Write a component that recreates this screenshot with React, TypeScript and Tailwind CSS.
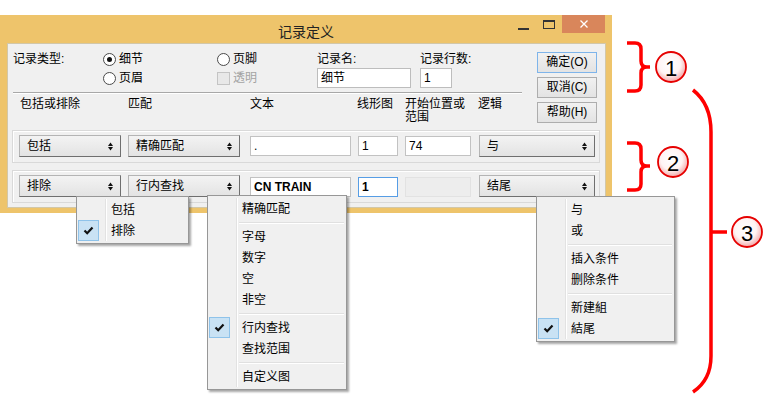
import React from "react";

const font = "font-['Liberation_Sans','Noto_Sans_CJK_SC',sans-serif]";

function Arrows() {
  return (
    <svg width="5" height="9" viewBox="0 0 5 9" className="shrink-0">
      <polygon points="0,4 2.5,0.5 5,4" fill="#111" />
      <polygon points="0,5 2.5,8.5 5,5" fill="#111" />
    </svg>
  );
}

function Select({ label, className }: { label: string; className: string }) {
  return (
    <div
      className={`flex h-[22px] items-center justify-between border border-[#b4b4b4] border-r-[#6f6f6f] border-b-[#6f6f6f] bg-gradient-to-b from-[#f3f3f3] to-[#e3e3e3] pl-[7px] pr-[7px] text-[12px] leading-[14px] text-black ${className}`}
    >
      <span>{label}</span>
      <Arrows />
    </div>
  );
}

function Field({ value, className }: { value: string; className: string }) {
  return (
    <div
      className={`mt-[1px] h-[20px] border bg-white px-[3px] text-[12px] leading-[18px] text-black ${className}`}
    >
      {value}
    </div>
  );
}

function Radio({ checked, label }: { checked?: boolean; label: string }) {
  return (
    <div className="flex h-[16px] items-center gap-[3px]">
      <div className="flex h-[13px] w-[13px] items-center justify-center rounded-full border border-[#4a4a4a] bg-white">
        {checked && <div className="h-[5px] w-[5px] rounded-full bg-[#111]" />}
      </div>
      <span className="text-[12px] leading-[14px] text-black">{label}</span>
    </div>
  );
}

function Button({ label, primary }: { label: string; primary?: boolean }) {
  return (
    <div
      className={`h-[21px] w-[60px] border bg-gradient-to-b from-[#f1f1f1] to-[#e3e3e3] text-center text-[12px] leading-[19px] text-black ${
        primary ? "border-[#7eb4ea]" : "border-[#adadad]"
      }`}
    >
      {label}
    </div>
  );
}

function Check() {
  return (
    <div className="ml-[1px] flex h-[21px] w-[21px] items-center justify-center border border-[#8fc3ea] bg-[#c9e2f4]">
      <svg width="11" height="9" viewBox="0 0 11 9">
        <path d="M1.5 4.5 L4.2 7.2 L9.5 1.5" stroke="#111" strokeWidth="2.2" fill="none" />
      </svg>
    </div>
  );
}

type Item = { label?: string; checked?: boolean; sep?: boolean };

function Menu({ items, className }: { items: Item[]; className: string }) {
  return (
    <div
      className={`absolute border border-[#979797] bg-[#f0f0f0] py-[2px] shadow-[2px_2px_2px_rgba(0,0,0,0.35)] ${className}`}
    >
      {items.map((it, i) =>
        it.sep ? (
          <div key={i} className="flex h-[7px]">
            <div className="w-[28px]" />
            <div className="w-[2px] border-l border-r border-l-[#e2e2e2] border-r-white" />
            <div className="flex flex-1 items-center pl-[1px] pr-[2px]">
              <div className="h-[2px] w-full border-t border-b border-t-[#e0e0e0] border-b-white" />
            </div>
          </div>
        ) : (
          <div key={i} className="flex h-[21px] items-center">
            <div className="flex w-[28px] items-center">{it.checked && <Check />}</div>
            <div className="h-full w-[2px] border-l border-r border-l-[#e2e2e2] border-r-white" />
            <span className="pl-[4px] text-[12px] leading-[14px] text-black">{it.label}</span>
          </div>
        )
      )}
    </div>
  );
}

function Annotations() {
  const circle = (cx: number, cy: number, n: string) => (
    <g>
      <circle cx={cx} cy={cy} r="15" fill="url(#bub)" stroke="#e60000" strokeWidth="1.8" />
      <text
        x={cx}
        y={cy + 1}
        textAnchor="middle"
        dominantBaseline="central"
        fontSize="22"
        fontFamily="Liberation Sans, Arial, sans-serif"
        fill="#000"
      >
        {n}
      </text>
    </g>
  );
  return (
    <svg className="pointer-events-none absolute left-0 top-0" width="778" height="419" viewBox="0 0 778 419">
      <defs>
        <radialGradient id="bub" cx="45%" cy="40%" r="60%">
          <stop offset="0%" stopColor="#ffffff" />
          <stop offset="60%" stopColor="#fff4f4" />
          <stop offset="100%" stopColor="#f2a8a8" />
        </radialGradient>
      </defs>
      <g stroke="#ff0000" strokeWidth="3.5" fill="none">
        <path d="M627 43 L635 43 Q641 43 641 49 L641 61 Q641 67 647 67 L650 67 M647 67 Q641 67 641 73 L641 85 Q641 91 635 91 L627 91" />
        <path d="M627 143 L635 143 Q641 143 641 149 L641 160 Q641 166 647 166 L650 166 M647 166 Q641 166 641 172 L641 184 Q641 190 635 190 L627 190" />
        <path d="M693 90 Q711 104 711 132 L711 356 Q711 380 693 392" />
        <path d="M711 232 L727 232" />
      </g>
      {circle(671, 67, "1")}
      {circle(673, 162, "2")}
      {circle(747, 232, "3")}
    </svg>
  );
}

export default function App() {
  return (
    <div className={`relative h-[419px] w-[778px] overflow-hidden bg-white ${font}`}>
      <div className="pt-[15px]">
        <div className="w-[612px] bg-[#eec46b] pb-[5px] pl-[7px] pr-[6px]">
          {/* title bar */}
          <div className="-ml-[7px] -mr-[6px] flex h-[28px]">
            <div className="w-[101px]" />
            <div className="flex-1 pt-[8px] text-center text-[14px] leading-[18px] text-[#222]">记录定义</div>
            <div className="flex w-[101px] items-start">
              <div className="flex h-[18px] w-[25px] items-end justify-center pb-[3px]">
                <div className="h-[2px] w-[11px] bg-[#333]" />
              </div>
              <div className="flex h-[18px] w-[26px] items-center justify-center">
                <div className="h-[9px] w-[12px] border border-t-2 border-[#333]" />
              </div>
              <div className="flex h-[18px] w-[43px] items-center justify-center bg-[#d9865b]">
                <svg width="8" height="8" viewBox="0 0 8 8">
                  <path d="M0.5 0.5 L7.5 7.5 M7.5 0.5 L0.5 7.5" stroke="#fff" strokeWidth="1.3" />
                </svg>
              </div>
              <div className="w-[7px]" />
            </div>
          </div>

          {/* client area */}
          <div className="h-[165px] border border-[#d2c7a8] bg-[#f0f0f0]">
            <div className="flex h-[86px]">
              <div className="w-[529px] pl-[5px]">
                <div className="mt-[7px] flex">
                  <div className="w-[90px] text-[12px] leading-[16px] text-black">记录类型:</div>
                  <div className="flex w-[114px] flex-col gap-[3px]">
                    <Radio checked label="细节" />
                    <Radio label="页眉" />
                  </div>
                  <div className="flex w-[100px] flex-col gap-[3px]">
                    <Radio label="页脚" />
                    <div className="flex h-[16px] items-center gap-[3px]">
                      <div className="h-[13px] w-[13px] border border-[#c4c4c4] bg-[#e8e8e8]" />
                      <span className="text-[12px] leading-[14px] text-[#a3a3a3]">透明</span>
                    </div>
                  </div>
                  <div className="w-[103px]">
                    <div className="text-[12px] leading-[16px] text-black">记录名:</div>
                    <Field value="细节" className="w-[94px] border-[#bdbdbd]" />
                  </div>
                  <div>
                    <div className="text-[12px] leading-[16px] text-black">记录行数:</div>
                    <Field value="1" className="w-[32px] border-[#bdbdbd]" />
                  </div>
                </div>
                <div className="mt-[4px] h-[2px] w-[509px] border-t border-b border-t-[#a8a8a8] border-b-white" />
                <div className="mt-[4px] grid grid-cols-[108px_122px_107px_48px_73px_60px] pl-[7px] text-[12px] leading-[13px] text-black">
                  <div>包括或排除</div>
                  <div>匹配</div>
                  <div>文本</div>
                  <div>线形图</div>
                  <div>
                    开始位置或
                    <br />
                    范围
                  </div>
                  <div>逻辑</div>
                </div>
              </div>
              <div className="flex flex-col gap-[4px] pt-[8px]">
                <Button primary label="确定(O)" />
                <Button label="取消(C)" />
                <Button label="帮助(H)" />
              </div>
            </div>

            <div className="flex flex-col gap-[7px] pl-[4px]">
              <div className="h-[33px] w-[588px] border border-[#d9d9d9] pl-[6px] pt-[4px] shadow-[inset_1px_1px_0_#fff]">
                <div className="grid grid-cols-[109px_122px_108px_47px_74px_116px] items-start">
                  <Select label="包括" className="w-[102px]" />
                  <Select label="精确匹配" className="w-[112px]" />
                  <Field value="." className="w-[101px] border-[#c2c2c2]" />
                  <Field value="1" className="w-[40px] border-[#c2c2c2]" />
                  <Field value="74" className="w-[66px] border-[#c2c2c2]" />
                  <Select label="与" className="w-[116px]" />
                </div>
              </div>
              <div className="h-[33px] w-[588px] border border-[#d9d9d9] pl-[6px] pt-[4px] shadow-[inset_1px_1px_0_#fff]">
                <div className="grid grid-cols-[109px_122px_108px_47px_74px_116px] items-start">
                  <Select label="排除" className="w-[102px]" />
                  <Select label="行内查找" className="w-[112px]" />
                  <Field value="CN TRAIN" className="mt-[2px] w-[101px] border-[#c2c2c2] font-bold" />
                  <Field value="1" className="mt-[2px] w-[40px] border-[#569de5] font-bold" />
                  <div className="mt-[2px] h-[20px] w-[66px] border border-[#e2e2e2] bg-[#ededed]" />
                  <Select label="结尾" className="w-[116px]" />
                </div>
              </div>
            </div>
          </div>
        </div>
      </div>

      <Menu
        className="left-[76px] top-[196px] w-[113px]"
        items={[{ label: "包括" }, { label: "排除", checked: true }]}
      />
      <Menu
        className="left-[207px] top-[195px] w-[140px]"
        items={[
          { label: "精确匹配" },
          { sep: true },
          { label: "字母" },
          { label: "数字" },
          { label: "空" },
          { label: "非空" },
          { sep: true },
          { label: "行内查找", checked: true },
          { label: "查找范围" },
          { sep: true },
          { label: "自定义图" },
        ]}
      />
      <Menu
        className="left-[536px] top-[196px] w-[139px]"
        items={[
          { label: "与" },
          { label: "或" },
          { sep: true },
          { label: "插入条件" },
          { label: "删除条件" },
          { sep: true },
          { label: "新建組" },
          { label: "結尾", checked: true },
        ]}
      />

      <Annotations />
    </div>
  );
}
